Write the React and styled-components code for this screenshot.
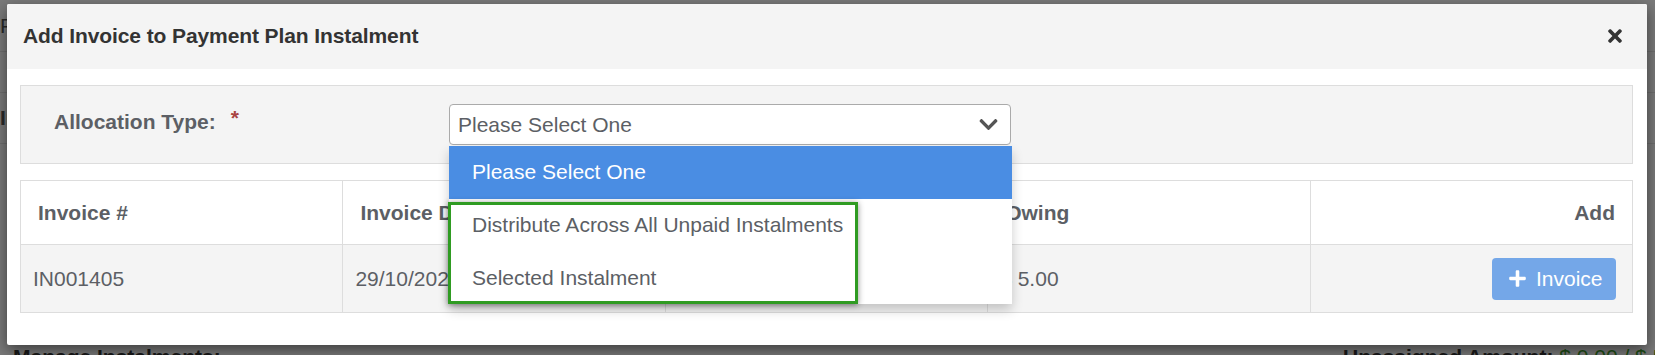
import React from 'react';
import styled, { createGlobalStyle } from 'styled-components';
import { FaTimes, FaChevronDown, FaPlus } from 'react-icons/fa';

const GlobalStyle = createGlobalStyle`
  html, body { margin: 0; padding: 0; }
  body {
    font-family: "Liberation Sans", Arial, Helvetica, sans-serif;
    background: #f4f4f4;
    overflow: hidden;
  }
  * { box-sizing: border-box; }
`;

const Viewport = styled.div`
  position: relative;
  width: 1655px;
  height: 355px;
  overflow: hidden;
`;

/* ---------- page behind the modal ---------- */
const Page = styled.div`
  display: flex;
  flex-direction: column;
  height: 372px;
  background: #f4f4f4;
  color: #555;
  font-size: 21px;
`;

const PageRow = styled.div`
  height: ${p => p.$h}px;
  display: flex;
  align-items: center;
  border-bottom: 1px solid #ddd;
  font-weight: ${p => (p.$bold ? 700 : 400)};
  white-space: nowrap;
`;

const PageFooter = styled.div`
  margin-top: auto;
  display: flex;
  align-items: center;
  height: 30px;
  padding-left: 13px;
  font-weight: 700;
  color: #333;
  white-space: nowrap;
`;

const FooterLeft = styled.div`
  width: 1330px;
  flex-shrink: 0;
`;

const Money = styled.span`
  color: #3c9a2b;
  font-weight: 400;
`;

const Backdrop = styled.div`
  position: absolute;
  inset: 0;
  background: rgba(0, 0, 0, 0.5);
`;

/* ---------- modal ---------- */
const Modal = styled.div`
  position: absolute;
  top: 4px;
  left: 7px;
  width: 1640px;
  height: 341px;
  background: #fff;
  border-radius: 2px;
  box-shadow: 0 5px 15px rgba(0, 0, 0, 0.5);
  display: flex;
  flex-direction: column;
`;

const ModalHeader = styled.div`
  height: 65px;
  flex-shrink: 0;
  background: #f4f4f4;
  display: flex;
  align-items: center;
  justify-content: space-between;
  padding: 0 22px 2px 16px;
  border-radius: 2px 2px 0 0;
`;

const Title = styled.h4`
  margin: 0;
  font-size: 21px;
  font-weight: 700;
  color: #333;
  letter-spacing: -0.1px;
`;

const CloseButton = styled.button`
  border: none;
  background: transparent;
  padding: 0;
  display: flex;
  align-items: center;
  color: #333;
  cursor: pointer;
`;

const ModalBody = styled.div`
  display: flex;
  flex-direction: column;
  gap: 16px;
  padding: 16px 14px 0 13px;
`;

const Panel = styled.div`
  background: #f4f4f4;
  border: 1px solid #ddd;
  padding: 18px 0;
  display: flex;
  align-items: flex-start;
`;

const LabelCell = styled.div`
  width: 428px;
  flex-shrink: 0;
  padding: 3px 0 0 33px;
  line-height: 30px;
  font-size: 21px;
  font-weight: 700;
  color: #5c5f65;
`;

const Required = styled.span`
  color: #a94442;
  margin-left: 15px;
  line-height: 0;
  vertical-align: 4px;
`;

const SelectWrap = styled.div`
  position: relative;
  width: 562px;
`;

const SelectBox = styled.div`
  height: 41px;
  background: #fff;
  border: 1px solid #aaa;
  border-radius: 4px;
  display: flex;
  align-items: center;
  justify-content: space-between;
  padding: 0 11px 0 8px;
  font-size: 21px;
  color: #5c5f65;
`;

const Chevron = styled(FaChevronDown)`
  color: #555;
`;

const Menu = styled.ul`
  position: absolute;
  top: calc(100% + 1px);
  left: 0;
  width: 563px;
  margin: 0;
  padding: 0;
  list-style: none;
  background: #fff;
  box-shadow: 0 6px 12px rgba(0, 0, 0, 0.2);
  border-radius: 0 0 3px 3px;
  z-index: 5;
`;

const Option = styled.li`
  height: 52.67px;
  display: flex;
  align-items: center;
  padding: 0 23px;
  font-size: 21px;
  background: ${p => (p.$active ? '#4a8de3' : '#fff')};
  color: ${p => (p.$active ? '#fff' : '#5c5f65')};
`;

const Highlight = styled.div`
  position: absolute;
  left: -1px;
  top: 56px;
  width: 410px;
  height: 102px;
  border: 3px solid #2f9b22;
  box-shadow: 0 1px 6px rgba(0, 0, 0, 0.45);
  pointer-events: none;
`;

const Table = styled.table`
  width: 100%;
  border-collapse: collapse;
  table-layout: fixed;
  font-size: 21px;
  color: #5c5f65;
`;

const Th = styled.th`
  height: 64px;
  border: 1px solid #ddd;
  padding: 0 17px;
  text-align: ${p => (p.$right ? 'right' : 'left')};
  font-weight: 700;
  background: #fff;
  vertical-align: middle;
`;

const Td = styled.td`
  height: 68px;
  border: 1px solid #ddd;
  padding: 0 ${p => (p.$right ? '16px' : '12px')};
  text-align: ${p => (p.$right ? 'right' : 'left')};
  background: #f4f4f4;
  vertical-align: middle;
`;

const AddButton = styled.button`
  height: 42px;
  width: 124px;
  display: inline-flex;
  align-items: center;
  gap: 9px;
  padding: 0 0 0 16px;
  border: none;
  border-radius: 4px;
  background: #74a7e8;
  color: #fff;
  font-family: inherit;
  font-size: 21px;
  vertical-align: middle;
`;

export default function App() {
  return (
    <Viewport>
      <GlobalStyle />
      <Page>
        <PageRow $h={52}>Frequency</PageRow>
        <PageRow $h={41} />
        <PageRow $h={51} $bold>Instalment #</PageRow>
        <PageFooter>
          <FooterLeft>Manage Instalments:</FooterLeft>
          <span>
            Unassigned Amount: <Money>$ 0.00 / $ 5.00</Money>
          </span>
        </PageFooter>
      </Page>
      <Backdrop />
      <Modal>
        <ModalHeader>
          <Title>Add Invoice to Payment Plan Instalment</Title>
          <CloseButton aria-label="Close">
            <FaTimes size={20} />
          </CloseButton>
        </ModalHeader>
        <ModalBody>
          <Panel>
            <LabelCell>
              Allocation Type:<Required>*</Required>
            </LabelCell>
            <SelectWrap>
              <SelectBox>
                <span>Please Select One</span>
                <Chevron size={21} />
              </SelectBox>
              <Menu>
                <Option $active>Please Select One</Option>
                <Option>Distribute Across All Unpaid Instalments</Option>
                <Option>Selected Instalment</Option>
                <Highlight />
              </Menu>
            </SelectWrap>
          </Panel>
          <Table>
            <thead>
              <tr>
                <Th>Invoice #</Th>
                <Th>Invoice Date</Th>
                <Th>Invoice Total</Th>
                <Th>Owing</Th>
                <Th $right>Add</Th>
              </tr>
            </thead>
            <tbody>
              <tr>
                <Td>IN001405</Td>
                <Td>29/10/2024</Td>
                <Td>$ 5.00</Td>
                <Td>$ 5.00</Td>
                <Td $right>
                  <AddButton>
                    <FaPlus size={19} />
                    Invoice
                  </AddButton>
                </Td>
              </tr>
            </tbody>
          </Table>
        </ModalBody>
      </Modal>
    </Viewport>
  );
}
